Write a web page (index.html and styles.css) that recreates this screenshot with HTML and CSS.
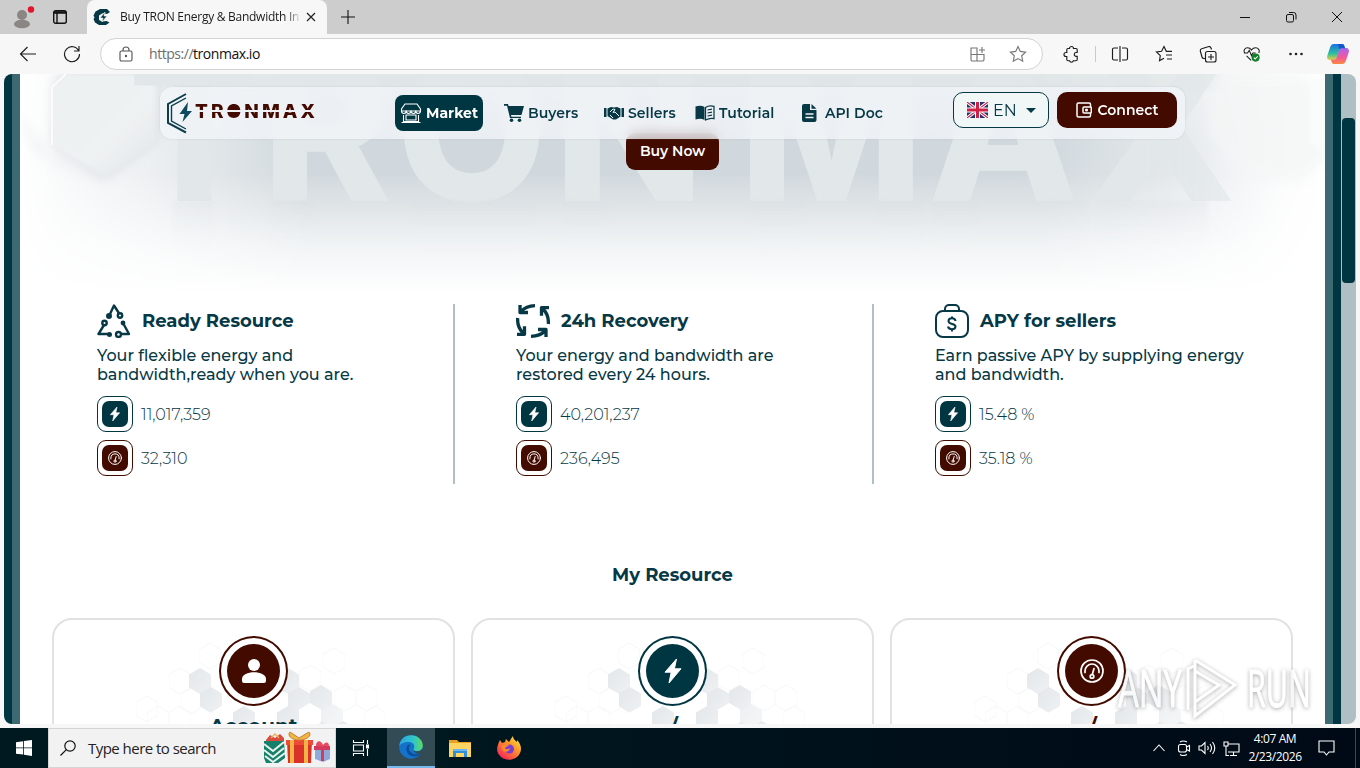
FILE: index.html
```html
<!DOCTYPE html>
<html lang="en">
<head>
<meta charset="utf-8">
<title>Buy TRON Energy &amp; Bandwidth</title>
<link rel="stylesheet" href="styles.css">
</head>
<body>
<svg class="defs" aria-hidden="true">
  <defs>
    <symbol id="bolt" viewBox="0 0 24 24"><path d="M15.500 0 4 13.200h6.200L8 24 20 9.800h-6.600z" fill="currentColor" stroke="currentColor" stroke-linejoin="round"/></symbol>
    <symbol id="gauge" viewBox="0 0 24 24"><g fill="none" stroke="currentColor" stroke-width="1.700" stroke-linecap="round"><circle cx="12" cy="12" r="11"/><path d="M5 13.500V12a7 7 0 0 1 14 0v1.500M12.300 15.500 14 9.500"/><circle cx="12" cy="17.400" r="1.800"/></g></symbol>
    <symbol id="hexagon" viewBox="0 0 22 26"><path d="M11 0 22 6.500v13L11 26 0 19.500v-13z"/></symbol>
    <linearGradient id="tile" x2="1" y2="1"><stop stop-color="#e3e7e9"/><stop offset="1" stop-color="#eff1f3"/></linearGradient>
    <symbol id="hexes" viewBox="0 0 399 106">
      <g fill="none" stroke="#f6f7f8">
        <use href="#hexagon" x="115" y="48" width="22" height="26"/><use href="#hexagon" x="145" y="23" width="22" height="26"/><use href="#hexagon" x="126" y="68" width="22" height="26"/><use href="#hexagon" x="115" y="86" width="22" height="26"/><use href="#hexagon" x="93" y="86" width="22" height="26"/><use href="#hexagon" x="82" y="76" width="22" height="26"/><use href="#hexagon" x="245" y="45" width="22" height="26"/><use href="#hexagon" x="269" y="28" width="22" height="26"/><use href="#hexagon" x="280" y="65" width="22" height="26"/><use href="#hexagon" x="302" y="65" width="22" height="26"/><use href="#hexagon" x="310" y="86" width="22" height="26"/>
      </g>
      <g fill="url(#tile)">
        <use href="#hexagon" x="135" y="48" width="22" height="26"/><use href="#hexagon" x="146" y="67" width="22" height="26"/><use href="#hexagon" x="179" y="86" width="22" height="26"/><use href="#hexagon" x="223" y="48" width="22" height="26"/><use href="#hexagon" x="234" y="67" width="22" height="26"/><use href="#hexagon" x="256" y="65" width="22" height="26"/><use href="#hexagon" x="223" y="86" width="22" height="26"/><use href="#hexagon" x="267" y="84" width="22" height="26" opacity=".6"/>
        <use href="#hexagon" x="256" y="101" width="22" height="26"/><use href="#hexagon" x="278" y="101" width="22" height="26"/>
      </g>
      <g fill="#fff"><use href="#hexagon" x="245" y="83" width="22" height="26"/><use href="#hexagon" x="157" y="86" width="22" height="26"/></g>
    </symbol>
  </defs>
</svg>

<div class="screen">
  <header class="tabbar">
    <svg class="profile" viewBox="0 0 24 26"><circle cx="10" cy="11" r="5" fill="#8b8583"/><ellipse cx="10" cy="20" rx="8" ry="4.300" fill="#8b8583"/><circle cx="19" cy="5.500" r="3.200" fill="#e0142c"/></svg>
    <svg class="workspaces" viewBox="0 0 16 16" fill="none" stroke="#111" stroke-width="1.400"><rect x="1.700" y="1.700" width="12.600" height="12.600" rx="2"/><path d="M2 3.500h12" stroke-width="2.500"/><path d="M5 4v10"/></svg>
    <div class="tab">
      <svg class="favicon" viewBox="0 0 18 18"><path d="M7 1h7l3 3-3 2-4-1-4 2.500v4.500L9 13.500l4.500-.500 3 1.500-3.500 2.500H6L2 14.500.5 11l1-1.500-1-2 2-4z" fill="#063845"/><path d="m12 4-5 6h3l-1 4 5-6h-3z" fill="#063845" stroke="#f7f7f7" stroke-width=".6"/></svg>
      <span class="tab-title">Buy TRON Energy &amp; Bandwidth In</span>
      <svg class="tab-close" viewBox="0 0 10 10" stroke="#222" stroke-width="1.200"><path d="m1 1 8 8M9 1 1 9"/></svg>
    </div>
    <svg class="newtab" viewBox="0 0 14 14" stroke="#111" stroke-width="1.100"><path d="M7 0v14M0 7h14"/></svg>
    <div class="window-controls">
      <svg viewBox="0 0 12 12"><path d="M1 6.500h10"/></svg>
      <svg viewBox="0 0 12 12"><rect x="1.500" y="3.500" width="7" height="7.500" rx="1.500"/><path d="M4 1.500h4.500a2.500 2.500 0 0 1 2.500 2.500v4.500"/></svg>
      <svg viewBox="0 0 12 12"><path d="m1 1 10 10M11 1 1 11"/></svg>
    </div>
  </header>

  <div class="toolbar">
    <svg class="ico back" viewBox="0 0 18 18"><path d="M17 9H1.500M8.500 2 1.500 9l7 7"/></svg>
    <svg class="ico reload" viewBox="0 0 18 18"><path d="M15.800 6A7.500 7.500 0 1 0 16.500 9M16 1v5h-5"/></svg>
    <div class="address">
      <svg class="ico lock" viewBox="0 0 14 16"><rect x="1" y="5" width="12" height="10" rx="1.500"/><path d="M4 5V4a3 3 0 0 1 6 0v1"/><circle cx="7" cy="10" r=".6"/></svg>
      <span class="url"><span class="scheme">https://</span>tronmax.io</span>
      <svg class="ico grey apps" viewBox="0 0 16 16"><path d="M1 2h6v13H2.500A1.500 1.500 0 0 1 1 13.500zM1 8.500h13v5A1.500 1.500 0 0 1 12.500 15H7M12 1v6M9 4h6"/></svg>
      <svg class="ico grey star" viewBox="0 0 18 18"><path d="m9 1.500 2.300 4.900 5.300.7-3.900 3.700 1 5.400L9 13.600l-4.700 2.600 1-5.400L1.400 7.100l5.300-.7z"/></svg>
    </div>
    <div class="tools">
      <svg class="ico" viewBox="0 0 18 18"><path d="M6 3.500h1.500a2 2 0 0 1 4 0H14A1.200 1.200 0 0 1 15.200 4.700V7.500h-1a1.800 1.800 0 0 0 0 3.800h1v3.200a1.200 1.200 0 0 1-1.200 1.200h-2.600a2 2 0 0 1-3.900 0H6a1.200 1.200 0 0 1-1.200-1.200v-3H4a2 2 0 0 1 0-4h.8V4.700A1.200 1.200 0 0 1 6 3.500z"/></svg>
      <span class="divider"></span>
      <svg class="ico" viewBox="0 0 18 18"><path d="M7 3H3a1.500 1.500 0 0 0-1.500 1.500v9A1.500 1.500 0 0 0 3 15h4M11 3h4a1.500 1.500 0 0 1 1.500 1.500v9A1.500 1.500 0 0 1 15 15h-4M9 1v16"/></svg>
      <svg class="ico" viewBox="0 0 18 18"><path d="M9 13.200 4.500 15.600l.8-5L1.500 7l5.100-.7L9 1.600l2.300 4.700H17M11 10h6M12 14h5"/></svg>
      <svg class="ico" viewBox="0 0 18 18"><rect x="6.500" y="6.500" width="10.500" height="10.500" rx="2"/><path d="M12 9v6M9 12h6M6 13.500H5a2 2 0 0 1-2-1.500L1.300 6A2 2 0 0 1 2.700 3.700L9 1.800A2 2 0 0 1 12 3l.5 1.500"/></svg>
      <svg class="ico" viewBox="0 0 20 18"><path d="M2 8C0 5 2 2 5 2c2 0 3.500 1 4.500 2.500C10.500 3 12 2 14 2c3 0 5 3 3.500 6M1 8h4l2-3 2.500 6L11 8h3M4 11l5 5"/><circle cx="14" cy="13" r="4.500" fill="#13802c" stroke="none"/><path d="m12 13 1.500 1.500 3-3" stroke="#fff"/></svg>
      <svg class="ico" viewBox="0 0 18 18"><g fill="#222" stroke="none"><circle cx="3.500" cy="9" r="1.300"/><circle cx="9" cy="9" r="1.300"/><circle cx="14.500" cy="9" r="1.300"/></g></svg>
      <svg class="copilot" viewBox="0 0 24 24">
        <defs><linearGradient id="cpA" x2="0" y2="1"><stop stop-color="#1a6fe8"/><stop offset=".6" stop-color="#2cc0a0"/><stop offset="1" stop-color="#e8cf3d"/></linearGradient><linearGradient id="cpB" x2="0" y2="1"><stop stop-color="#a765f0"/><stop offset=".6" stop-color="#f3589c"/><stop offset="1" stop-color="#fb8a3c"/></linearGradient></defs>
        <path d="M16 2H8C5.500 2 4.500 4 3.700 6.500L1.500 13c-1 3 0 5 3 5H8c2 0 3-2 3.500-4l2-6C14 6.500 15 6 19 6.500 18.500 4 18 2 16 2z" fill="url(#cpA)"/><path d="M8 22h8c2.500 0 3.500-2 4.300-4.500l2.200-6.500c1-3 0-5-3-5H16c-2 0-3 2-3.500 4l-2 6C10 17.500 9 18 5 17.500 5.500 20 6 22 8 22z" fill="url(#cpB)"/><path d="M12 2h4c2 0 2.500 2 3 4.500-2-.5-5-.5-5.700 1z" fill="#1557c8"/>
      </svg>
    </div>
  </div>

  <main class="page">
    <div class="stripe left"></div>
    <div class="content">
      <section class="hero">
        <svg class="hero-art" viewBox="0 0 1305 220">
          <defs>
            <linearGradient id="haze" x2="0" y2="1"><stop offset="0" stop-color="#dde2e5"/><stop offset=".3" stop-color="#d0d8dd"/><stop offset=".45" stop-color="#d1d8dd"/><stop offset=".6" stop-color="#dfe4e7"/><stop offset=".78" stop-color="#f1f4f5"/><stop offset="1" stop-color="#fff"/></linearGradient>
            <linearGradient id="sides"><stop offset="0" stop-color="#000"/><stop offset=".03" stop-color="#222"/><stop offset=".1" stop-color="#666"/><stop offset=".22" stop-color="#fff"/><stop offset=".78" stop-color="#fff"/><stop offset=".88" stop-color="#999"/><stop offset=".97" stop-color="#111"/><stop offset="1" stop-color="#000"/></linearGradient>
            <mask id="edge"><rect width="1305" height="220" fill="url(#sides)"/></mask>
            <linearGradient id="cell" x2="1" y2="1"><stop stop-color="#eef1f1"/><stop offset=".6" stop-color="#eff2f3"/><stop offset="1" stop-color="#dfe4e6"/></linearGradient>
            <linearGradient id="letter" x2="0" y2="1"><stop offset="0" stop-color="#e1e7e8"/><stop offset=".85" stop-color="#e2e7e9"/><stop offset="1" stop-color="#e4e8ea"/></linearGradient>
            <linearGradient id="soft" x2="0" y2="1"><stop offset="0" stop-color="#d9e0e4"/><stop offset="1" stop-color="#fff" stop-opacity="0"/></linearGradient>
            <linearGradient id="fadeRight"><stop offset=".86" stop-color="#fff"/><stop offset=".94" stop-color="#888"/></linearGradient>
            <mask id="wordFade"><rect width="1305" height="220" fill="url(#fadeRight)"/></mask>
            <filter id="blur"><feGaussianBlur stdDeviation="6"/></filter>
            <filter id="blurSmall"><feGaussianBlur stdDeviation="2"/></filter>
          </defs>
          <rect width="1305" height="220" fill="url(#haze)" mask="url(#edge)"/>
          <path d="M110-6h1090v22H110z" fill="#e3e8e9" filter="url(#blurSmall)" opacity=".7"/>
          <path d="M1190 0h95l25 30v50l-30 30-60-10-30-40z" fill="#f4f6f6" filter="url(#blur)" opacity=".75"/>
          <path d="M1290 8v62l15 9V0z" fill="#fafbfb" filter="url(#blurSmall)"/>
          <path d="M-10 30 20 80l20 5 44 24-54-24z" fill="#e5e8ea" filter="url(#blur)"/>
          <path d="M34 6 48-4h90v70L84 106 32 72z" fill="#d2d9dd" filter="url(#blur)" opacity=".7"/>
          <path d="M32 13 46 0h90v70L84 103 32 71z" fill="url(#cell)" filter="url(#blurSmall)"/>
          <path d="M46 0 32 13v58" fill="none" stroke="#fafbfb" stroke-width="2"/>
          <g class="wordmark" mask="url(#wordFade)">
            <text y="127" x="108 242 376 534 719 908 1067" fill="url(#letter)">TRONMAX</text>
          </g>
          <g fill="url(#soft)" opacity=".3" filter="url(#blurSmall)"><path d="M153 127h40v60h-40zM252 127h40v55h-40zM393 127h120v50H393zM546 127h40v60h-40zM733 127h50v55h-50zM861 127h40v55h-40zM915 127h40v50h-40zM1027 127h40v50h-40zM1077 127h110v45h-110z"/></g>
        </svg>
        <button class="buy">Buy Now</button>
        <nav class="nav">
          <div class="brand">
            <svg viewBox="0 0 150 42">
              <g fill="none" stroke="#0b3d4b"><path d="M20 2 2 12v19l18 9.500" stroke-width="2"/><path d="M20 6 5.500 14v15L20 37" stroke-width="1.400"/></g>
              <path d="M22 10 13.500 22h5L16.500 30 26 19h-5z" fill="#0d4a61"/>
              <text x="29" y="26" textLength="120">TRONMAX</text>
              <circle cx="68.500" cy="19" r="5.500" fill="#430b00"/>
              <path d="M29 19h120" stroke="#eef2f4" stroke-width="2"/>
            </svg>
          </div>
          <div class="links">
            <a class="link active"><svg viewBox="0 0 22 22" fill="none" stroke="#fff" stroke-width="1.100"><path d="M5 2h12l3.500 5v2h-19V7zM3.500 13v6.500h15V13M1.500 20.500h19M6 13h10v5H6z"/><path d="M1.500 8.500c0 4 4.700 4 4.700 0 0 4 4.800 4 4.800 0 0 4 4.800 4 4.800 0 0 4 4.700 4 4.700 0"/></svg>Market</a>
            <a class="link buyers"><svg viewBox="0 0 20 18" fill="#063845"><path d="M0 0h4l.6 2H20l-2.500 9H7l.4 1.800H17V14H6L3 1.800H0z"/><circle cx="7.500" cy="16.200" r="1.800"/><circle cx="15.500" cy="16.200" r="1.800"/></svg>Buyers</a>
            <a class="link sellers"><svg viewBox="0 0 20 14" fill="#063845"><path d="M0 2h2.500v9H0zM17.500 2H20v9h-2.500zM3.500 2.500 7 1l3 .5L13 1l3.500 1.500v8L12 13.500H9L3.500 10z"/><path d="m6 6 3-3 2 .5-2 3 2-.5 4 4M6 9l3 3" stroke="#eef2f4" fill="none"/></svg>Sellers</a>
            <a class="link tutorial"><svg viewBox="0 0 20 16" fill="#063845"><path d="M9.500 2v13C7 13.500 4 13.500.5 14.500v-13C4 .5 7 .5 9.500 2z"/><path d="M10.500 2.500c2-1.500 5-2 8.500-1.200v12.400c-3-.7-6 0-8.500 1.300z" fill="none" stroke="#063845" stroke-width="1.200"/><path d="m12.500 5 4.500-.8M12.500 8l4.500-.8M12.500 11l4.500-.8" stroke="#063845" stroke-width="1.200"/></svg>Tutorial</a>
            <a class="link doc"><svg viewBox="0 0 15 18" fill="#063845"><path d="M2 0h6v6h6.500v10a2 2 0 0 1-2 2H2a2 2 0 0 1-2-2V2a2 2 0 0 1 2-2zM9.500 0l5 4.700h-5z"/><path d="M3.500 10h8M3.500 13.500h8" stroke="#eef2f4" stroke-width="1.300"/></svg>API Doc</a>
          </div>
          <div class="actions">
            <button class="lang"><svg class="flag" viewBox="0 0 21 16"><path fill="#26306b" d="M0 0h21v16H0z"/><path d="m0 0 21 16M21 0 0 16" stroke="#fff" stroke-width="3.200"/><path d="m0 0 21 16M21 0 0 16" stroke="#cf2146" stroke-width="1.100"/><path d="M10.500 0v16M0 8h21" stroke="#fff" stroke-width="5"/><path d="M10.500 0v16M0 8h21" stroke="#cf2146" stroke-width="3"/></svg>EN<svg class="caret" viewBox="0 0 10 5"><path d="M0 0h10L5 5z" fill="#063845"/></svg></button>
            <button class="connect"><svg viewBox="0 0 16 16" fill="none" stroke="#fff" stroke-width="1.500"><path d="M14.500 5V2.500A1.500 1.500 0 0 0 13 1H2.500A1.500 1.500 0 0 0 1 2.500v11A1.500 1.500 0 0 0 2.500 15H13a1.500 1.500 0 0 0 1.500-1.500V11"/><rect x="7" y="5" width="8.300" height="6" rx="1"/><circle cx="10.500" cy="8" r=".8"/></svg>Connect</button>
          </div>
        </nav>
      </section>

      <section class="features">
        <article class="feature">
          <h3><svg viewBox="0 0 34 34" fill="none" stroke="#063845" stroke-width="2.400"><path d="m13 10 4-8.500 5.500 8.500M7 21l-5.500 9h10M26 19l6 11h-8" stroke-linejoin="round"/><circle cx="12" cy="12" r="1.800" fill="#063845"/><circle cx="23" cy="11.500" r="2.200"/><circle cx="7.500" cy="19" r="2.200"/><circle cx="26" cy="19" r="1.200" fill="#063845"/><circle cx="12.500" cy="30.500" r="1.300" fill="#063845"/><circle cx="21.500" cy="30.500" r="2.500"/></svg><span>Ready Resource</span></h3>
          <p>Your flexible energy and<br>bandwidth,ready when you are.</p>
          <div class="stat"><i class="chip teal"><svg><use href="#bolt"/></svg></i><span>11,017,359</span></div>
          <div class="stat"><i class="chip brown"><svg><use href="#gauge"/></svg></i><span>32,310</span></div>
        </article>
        <article class="feature second">
          <h3><svg viewBox="0 0 34 34" fill="none" stroke="#063845" stroke-width="3.300" stroke-linejoin="round"><path d="M19 1.700Q10 2 5 7.500M4 1v7.500h8M32.300 20Q33 11 27 5M33 3.700h-7.500v8M15 32.300Q24 32 29 27M30 33v-7.500h-8M1.700 14Q1 23 7 29M1 30.300h7.500v-8"/></svg><span>24h Recovery</span></h3>
          <p>Your energy and bandwidth are<br>restored every 24 hours.</p>
          <div class="stat"><i class="chip teal"><svg><use href="#bolt"/></svg></i><span>40,201,237</span></div>
          <div class="stat"><i class="chip brown"><svg><use href="#gauge"/></svg></i><span>236,495</span></div>
        </article>
        <article class="feature third">
          <h3><svg viewBox="0 0 34 34" fill="none" stroke="#063845" stroke-width="2"><rect x="1" y="7" width="32" height="26" rx="7"/><path d="M10 7V5a4 4 0 0 1 4-4h6a4 4 0 0 1 4 4v2"/><path d="M20.500 17c-.5-4-7-3.500-7 0 0 4 7 2 7 5.500 0 3.500-7 3.500-7.500 0M17 12.500v2M17 25v2.500"/></svg><span>APY for sellers</span></h3>
          <p>Earn passive APY by supplying energy<br>and bandwidth.</p>
          <div class="stat"><i class="chip teal"><svg><use href="#bolt"/></svg></i><span>15.48 %</span></div>
          <div class="stat"><i class="chip brown"><svg><use href="#gauge"/></svg></i><span>35.18 %</span></div>
        </article>
      </section>

      <h2 class="section-title">My Resource</h2>

      <section class="cards">
        <article class="card brown">
          <svg class="pattern"><use href="#hexes"/></svg>
          <div class="badge"><span><svg viewBox="0 0 24 24" fill="#fff"><circle cx="12" cy="6" r="6"/><path d="M0 20c0-9 24-9 24 0v2a2 2 0 0 1-2 2H2a2 2 0 0 1-2-2z"/></svg></span></div>
          <h4>Account</h4>
        </article>
        <article class="card teal">
          <svg class="pattern"><use href="#hexes"/></svg>
          <div class="badge"><span><svg><use href="#bolt"/></svg></span></div>
          <h4 class="slash">/</h4>
        </article>
        <article class="card brown">
          <svg class="pattern"><use href="#hexes"/></svg>
          <div class="badge"><span><svg><use href="#gauge"/></svg></span></div>
          <h4 class="slash">/</h4>
        </article>
      </section>
    </div>
    <div class="stripe right"></div>
    <div class="scrollbar"><div class="thumb"></div></div>
  </main>

  <footer class="taskbar">
    <div class="start"><svg viewBox="0 0 16 16" fill="#fff"><path d="M0 2.200 7.200 1.200v6.300H0zM8 1.100 16 0v7.500H8zM0 8.300h7.200v6.300L0 13.700zM8 8.300h8V16l-8-1.200z"/></svg></div>
    <div class="search">
      <svg class="glass" viewBox="0 0 16 16" fill="none" stroke="#111" stroke-width="1.200"><circle cx="10" cy="6" r="5.200"/><path d="M6.300 9.700.5 15.500"/></svg>
      <span>Type here to search</span>
      <svg class="gifts" viewBox="0 0 68 34">
        <path d="m3 9 4-5 5 3 5-4 4 4v6H3z" fill="#d84b3e"/><path d="m8 7 4-4 4 4" fill="none" stroke="#e9b35c" stroke-width="1.500"/><path d="M1 10h20l1 17-7 5H3l-2-5z" fill="#16806b"/><path d="m1 13 9 7 11-9M1 19l9 7 11-9M2 25l8 6 12-9" fill="none" stroke="#e7f4ee" stroke-width="2"/><path d="M24 9h25l-1 23H25z" fill="#d8322a"/><path d="M23 9h27v5H23z" fill="#ee4a38"/><path d="M27 9h4v23h-4zM41 9h4v23h-4z" fill="#f2b544"/><path d="M36 9c-8 0-12-5-9-8l9 6 10-6c3 3-1 8-10 8z" fill="#f2b544" stroke="#c3812c"/><path d="M52 17h15v11l-7 3-8-3z" fill="#8ea9da"/><path d="M51 15h16v4H51z" fill="#d23a5e"/><path d="M53 15c0-6 5-6 7-1 3-4 6-3 6 1z" fill="#e84a5f"/><path d="M58 15h3v15h-3z" fill="#d23a5e"/>
      </svg>
    </div>
    <div class="task"><svg class="taskview" viewBox="0 0 18 16" fill="none" stroke="#fff" stroke-width="1.100"><path d="M1.500 0v2.500h10V0M1.500 16v-2.500h10V16M1.500 5h10v6h-10zM15.500 0v4M15.500 9v7"/><path d="M14.500 5h2v3h-2z" fill="#fff"/></svg></div>
    <div class="task edge"><svg viewBox="0 0 24 24"><defs><linearGradient id="eg"><stop stop-color="#2aa4e8"/><stop offset=".6" stop-color="#2fc7c9"/><stop offset="1" stop-color="#60d860"/></linearGradient></defs><circle cx="12" cy="12" r="11.800" fill="#1372c9"/><path d="M.3 11C1 4 6 .2 12 .2c7 0 11.800 5 11.800 10 0 4-3 6-6 6-2 0-3.500-.6-3.500-1.500 0-.8 1-1 1-3C15.300 9 13 7 9.500 7 5 7 1.500 9 .3 11z" fill="url(#eg)"/><path d="M9.500 9.500C6 12 7 18 11 20.500c4 2 8 1 11-2-5 2-11 0-12-4-.4-2 .4-3.500 1.500-4.500z" fill="#0c4e9b"/><path d="M14.500 14c0 1.800 2 2.400 4 2.200 2.500 0 4-1.200 5-3v4c-1 2-2 2.500-3 1.500-3 .5-6-1.500-6-4.700z" fill="#334b55"/></svg></div>
    <div class="task"><svg class="folder" viewBox="0 0 22 19"><path d="M0 1h8l2 2h12v4H0z" fill="#e9a21f"/><path d="M0 4h22v14H0z" fill="#fcd462"/><path d="M4 10h14v8h-3v-4H7v4H4z" fill="#2f8fdd"/><path d="M4 10h14v2H4z" fill="#6bb7ef"/></svg></div>
    <div class="task"><svg class="firefox" viewBox="0 0 24 24"><defs><linearGradient id="ff" x1="1" x2=".2" y2="1"><stop stop-color="#fff04a"/><stop offset=".45" stop-color="#ff9526"/><stop offset="1" stop-color="#f3205c"/></linearGradient></defs><path d="M3 4 5 7l3-1 1-3 3 3c1-1 2-4 4-6 0 3 2 4 4 6 0-1 0-1 0-2 4 4 5 9 3 13-3 7-13 9-19 4S0 10 3 4z" fill="url(#ff)"/><circle cx="12.500" cy="13" r="4.600" fill="#7a3fd0"/><path d="M4 10c3-1 5-2 8-1-1 2-3 1-4 3 1 2 4 1 5 0 0 3-4 5-7 3z" fill="#ff8a28"/></svg></div>
    <div class="tray">
      <svg viewBox="0 0 14 14"><path d="m1.500 10 5.500-6 5.500 6"/></svg>
      <svg class="meet" viewBox="0 0 14 16"><rect x="1.500" y="4.500" width="8" height="7.500" rx="2"/><path d="m9.500 7 3-1.500v5.500l-3-1.500M3 2q3-2 7 0M3 14.500q3 2 7 0"/></svg>
      <svg class="sound" viewBox="0 0 18 14"><path d="M1 5h2.500L7 1.500v11L3.500 9H1zM9.500 5q1.500 2 0 4M12 3q3 4 0 8M14.500 1q4.500 6 0 12"/></svg>
      <svg class="net" viewBox="0 0 17 15"><path d="M5 3h11v8H5M10.500 11v3M7 14.500h7M1 1h4v4H1zM3 5v9.500h3"/></svg>
      <div class="clock"><span>4:07 AM</span><span>2/23/2026</span></div>
      <svg class="notice" viewBox="0 0 17 16"><path d="M1 1h15v11H11l-2.500 3L6 12H1z"/></svg>
      <i class="peek"></i>
    </div>
  </footer>

  <svg class="watermark" viewBox="0 0 200 66">
    <text x="5" y="51" textLength="64" lengthAdjust="spacingAndGlyphs">ANY</text>
    <path d="M75 54V13l6-3M82 4v52M82 4l40 25-40 31V46l24-17-24-14" fill="none" stroke="#fff" stroke-width="3"/>
    <text x="134" y="51" textLength="64" lengthAdjust="spacingAndGlyphs">RUN</text>
  </svg>
</div>
</body>
</html>
```

FILE: styles.css
```css
* { box-sizing: border-box; }
body {
  margin: 0;
  width: 1360px;
  height: 768px;
  overflow: hidden;
  background: #f7f7f7;
  font-family: Montserrat, Inter, sans-serif;
  color: #063845;
}
button, h2, h3, h4, p { margin: 0; font: inherit; color: inherit; }
svg { display: block; flex: none; }
.defs { position: absolute; width: 0; height: 0; }
.screen { position: relative; display: flex; flex-direction: column; height: 768px; }

/* browser chrome */
.tabbar {
  height: 34px;
  display: flex;
  align-items: center;
  background: #cdcdcd;
  font-family: "Segoe UI", "Open Sans", sans-serif;
}
.profile { width: 24px; height: 26px; margin: 0 16px 0 12px; }
.workspaces { width: 16px; height: 16px; }
.tab {
  width: 240px;
  height: 34px;
  margin-left: 19px;
  padding: 0 11px 0 6px;
  display: flex;
  align-items: center;
  background: #f7f7f7;
  border-radius: 8px 8px 0 0;
}
.favicon { width: 18px; height: 18px; }
.tab-title {
  width: 180px;
  margin: -1px 6px 0 9px;
  overflow: hidden;
  white-space: nowrap;
  font-size: 12px;
  letter-spacing: -.27px;
  color: #1b1b1b;
  mask-image: linear-gradient(90deg, #000 165px, transparent 182px);
}
.tab-close { width: 10px; height: 10px; }
.newtab { width: 14px; height: 14px; margin-left: 14px; }
.window-controls { margin: 0 17px 0 auto; display: flex; gap: 34px; }
.window-controls svg { width: 12px; height: 12px; fill: none; stroke: #111; }

.toolbar {
  height: 40px;
  padding-bottom: 1px;
  display: flex;
  align-items: center;
  background: #f7f7f7;
}
.ico { width: 18px; height: 18px; fill: none; stroke: #1d1d1d; stroke-width: 1.15; }
.ico.grey { stroke: #777; }
.back { margin-left: 19px; }
.reload { margin-left: 26px; }
.address {
  width: 943px;
  height: 32px;
  margin-left: 19px;
  padding: 0 15px 0 18px;
  display: flex;
  align-items: center;
  background: #fff;
  border: 1px solid #d2d2d2;
  border-radius: 16px;
}
.lock { width: 14px; height: 16px; stroke: #555; }
.url {
  margin-left: 16px;
  font: 14px "Segoe UI", "Open Sans", sans-serif;
  letter-spacing: -.46px;
  color: #111;
}
.scheme { color: #6d6d6d; }
.apps { width: 16px; height: 16px; margin-left: auto; }
.star { margin-left: 23px; }
.tools { display: flex; align-items: center; margin-left: 19px; }
.tools .ico { margin-right: 26px; }
.tools .ico:first-child { margin-right: 15px; }
.tools .ico:nth-last-child(2) { margin-right: 21px; }
.divider { width: 1px; height: 16px; margin-right: 15px; background: #c9c9c9; }
.copilot { width: 24px; height: 24px; }

/* page frame */
.page {
  height: 650px;
  margin: 0 4px;
  display: flex;
  overflow: hidden;
  background: #fff;
  border-radius: 8px;
}
.stripe { width: 16px; flex: none; }
.stripe.left { background: linear-gradient(90deg, #003642 50%, #3d6a72 50%); }
.stripe.right { background: linear-gradient(90deg, #3d6a72 50%, #003642 50%); }
.content { width: 1305px; height: 650px; overflow: hidden; }
.scrollbar { width: 15px; padding: 44px 1px 0; background: #b0bfc4; }
.thumb { height: 165px; background: #003642; border-radius: 4px; }

/* hero */
.hero { position: relative; height: 230px; }
.hero-art { width: 1305px; height: 220px; }
.wordmark { font: 800 196px Inter, sans-serif; }
.buy {
  position: absolute;
  left: 606px;
  top: 59px;
  width: 93px;
  height: 37px;
  padding: 0 0 1px;
  border: 0;
  border-radius: 9px;
  background: #430b00;
  color: #fff;
  font-size: 14px;
  font-weight: 600;
}
.nav {
  position: absolute;
  left: 140px;
  top: 13px;
  width: 1025px;
  height: 52px;
  padding: 0 8px 0 6px;
  display: flex;
  background: rgba(243, 246, 249, .74);
  backdrop-filter: blur(6px);
  border-radius: 12px;
  box-shadow: 0 0 2px rgba(130, 145, 155, .3);
}
.brand { width: 229px; padding-top: 5px; }
.brand svg { width: 150px; height: 42px; }
.brand text { font: 800 19px Inter, sans-serif; fill: #430b00; }
.links { display: flex; align-items: flex-start; padding-top: 8px; }
.link {
  height: 36px;
  display: flex;
  align-items: center;
  gap: 4px;
  font-size: 14px;
  font-weight: 600;
  letter-spacing: .05px;
  white-space: nowrap;
}
.active {
  width: 88px;
  padding-left: 5px;
  border-radius: 8px;
  background: #003642;
  color: #fff;
  font-weight: 700;
}
.active svg { width: 22px; height: 22px; }
.buyers { width: 80px; margin-left: 21px; }
.buyers svg { width: 20px; height: 18px; }
.sellers { width: 78px; margin-left: 20px; }
.sellers svg { width: 20px; height: 14px; }
.tutorial { width: 85px; margin-left: 13px; }
.tutorial svg { width: 20px; height: 16px; }
.doc { gap: 8px; margin-left: 22px; }
.doc svg { width: 15px; height: 18px; }
.actions { display: flex; gap: 8px; margin-left: auto; padding-top: 5px; }
.actions button { height: 36px; display: flex; align-items: center; border-radius: 10px; padding: 0; }
.actions .lang {
  width: 96px;
  padding-left: 13px;
  border: 1px solid #063845;
  background: #f1f6f7;
  font-size: 16px;
  font-weight: 400;
}
.flag { width: 21px; height: 16px; margin-right: 5px; }
.caret { width: 10px; height: 5px; margin-left: 9px; }
.connect {
  width: 120px;
  justify-content: center;
  gap: 6px;
  border: 0;
  background: #430b00;
  color: #fff;
  font-size: 14px;
  font-weight: 600;
}
.connect svg { width: 16px; height: 16px; }

/* features */
.features {
  display: grid;
  grid-template-columns: repeat(3, 419px);
  margin-left: 16px;
}
.feature { height: 180px; padding-left: 61px; border-right: 2px solid #afbfc3; }
.feature.third { border: 0; }
.feature h3 {
  height: 34px;
  display: flex;
  align-items: center;
  gap: 11px;
  font-size: 18px;
  font-weight: 700;
  white-space: nowrap;
}
.feature h3 svg { width: 34px; height: 34px; }
.feature p {
  margin: 8px 0 12px;
  font-size: 16px;
  font-weight: 500;
  line-height: 19px;
  white-space: nowrap;
}
.stat {
  height: 36px;
  margin-bottom: 8px;
  display: flex;
  align-items: center;
  gap: 8px;
  font-size: 16px;
  font-weight: 300;
}
.chip {
  width: 36px;
  height: 36px;
  padding: 4px;
  border: 1px solid;
  border-radius: 9px;
  color: #fff;
}
.chip svg { width: 26px; height: 26px; padding: 6px; border-radius: 7px; overflow: visible; }
.chip.teal { border-color: #003642; }
.chip.teal svg { background: #003642; }
.chip.brown { border-color: #430b00; }
.chip.brown svg { background: #430b00; }

.section-title {
  margin-top: 80px;
  height: 22px;
  text-align: center;
  font-size: 18px;
  font-weight: 700;
  line-height: 22px;
}

/* cards */
.cards {
  display: grid;
  grid-template-columns: repeat(3, 403px);
  gap: 16px;
  margin: 32px 0 0 32px;
}
.card {
  position: relative;
  height: 240px;
  padding-top: 16px;
  display: flex;
  flex-direction: column;
  align-items: center;
  border: 2px solid #e0e2e3;
  border-radius: 20px;
}
.pattern { position: absolute; left: 0; top: 0; width: 399px; height: 106px; }
.badge {
  position: relative;
  width: 69px;
  height: 70px;
  padding: 6px;
  border: 2px solid;
  border-radius: 50%;
  background: #fff;
}
.badge span {
  height: 54px;
  display: flex;
  align-items: center;
  justify-content: center;
  border-radius: 50%;
}
.badge svg { width: 24px; height: 24px; color: #fff; overflow: visible; }
.card.brown .badge { border-color: #430b00; }
.card.brown .badge span { background: #430b00; }
.card.teal .badge { border-color: #003642; }
.card.teal .badge span { background: #003642; }
.card h4 { position: relative; margin-top: 8px; font-size: 20px; font-weight: 700; line-height: 24px; }
.card .slash { margin: 8px 0 0 3px; }
.card.brown .slash { color: #430b00; }

/* taskbar */
.taskbar {
  height: 40px;
  margin-top: 4px;
  display: flex;
  align-items: center;
  background: linear-gradient(90deg, #001820 30%, #00101b 65%, #000a16);
  font-family: "Segoe UI", "Open Sans", sans-serif;
}
.start { width: 48px; padding-left: 16px; }
.start svg { width: 16px; height: 16px; }
.search {
  width: 288px;
  height: 40px;
  padding: 0 4px 0 11px;
  display: flex;
  align-items: center;
  background: #f2f2f2;
  border: 1px solid #d5d5d5;
  color: #222;
  font-size: 15px;
  letter-spacing: -.53px;
}
.glass { width: 16px; height: 16px; margin-right: 12px; }
.gifts { width: 68px; height: 34px; margin-left: auto; }
.task { width: 49px; height: 40px; display: flex; align-items: center; justify-content: center; }
.task.edge { width: 48px; margin-left: 2px; background: #334b55; border-bottom: 2px solid #76b9ed; }
.edge svg, .firefox { width: 24px; height: 24px; }
.taskview { width: 18px; height: 16px; }
.folder { width: 22px; height: 19px; }
.tray { margin-left: auto; display: flex; align-items: center; color: #fff; }
.tray svg { width: 14px; height: 14px; fill: none; stroke: #fff; stroke-width: 1.1; }
.tray .meet { height: 16px; margin-left: 11px; }
.tray .sound { width: 18px; margin-left: 7px; }
.tray .net { width: 17px; height: 15px; margin-left: 7px; }
.clock {
  width: 56px;
  margin-left: 7px;
  display: flex;
  flex-direction: column;
  align-items: center;
  font-size: 12px;
  line-height: 18px;
  letter-spacing: -.4px;
}
.tray .notice { width: 17px; height: 16px; margin: 0 20px 0 15px; }
.peek { width: 1px; height: 40px; margin-right: 4px; background: #3b454d; }

.watermark {
  position: absolute;
  left: 1113px;
  top: 656px;
  width: 200px;
  height: 66px;
  opacity: .72;
  filter: drop-shadow(0 1px 2px rgba(90, 90, 90, .7));
}
.watermark text { font: 500 52px "Open Sans", sans-serif; fill: #fff; stroke: #fff; }
```
